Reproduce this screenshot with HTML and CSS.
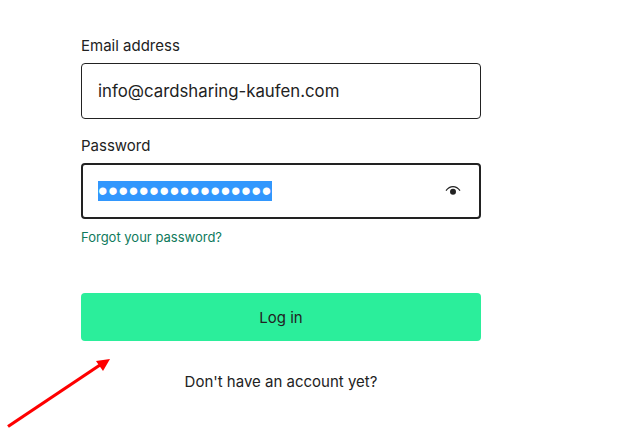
FILE: index.html
```html
<!DOCTYPE html>
<html lang="en">
<head>
  <meta charset="UTF-8">
  <title>Log in</title>
  <link rel="stylesheet" href="styles.css">
</head>
<body>
  <form class="login-form">
    <div class="field-label">Email address</div>
    <div class="field-box">
      <span class="field-value">info@cardsharing-kaufen.com</span>
    </div>

    <div class="field-label field-label-second">Password</div>
    <div class="field-box field-box-focus">
      <span class="pw-dots">&#8226;&#8226;&#8226;&#8226;&#8226;&#8226;&#8226;&#8226;&#8226;&#8226;&#8226;&#8226;&#8226;&#8226;&#8226;&#8226;&#8226;</span>
      <svg class="eye-icon" width="16" height="12" viewBox="0 0 16 12">
        <path d="M1 5.6C3 2.9 5.3 1.6 8 1.6s5 1.3 7 4" fill="none" stroke="#222" stroke-width="1.2"/>
        <circle cx="8" cy="6.8" r="3" fill="#222"/>
      </svg>
    </div>
    <a class="forgot-link" href="#">Forgot your password?</a>

    <div class="login-btn">Log in</div>
    <div class="signup-note">Don't have an account yet?</div>
  </form>

  <svg class="red-arrow" width="120" height="84" viewBox="0 0 120 84">
    <line x1="8" y1="76.5" x2="100" y2="15" stroke="#fe0000" stroke-width="3.2"/>
    <polygon points="110,9 96,11 103,21" fill="#fe0000"/>
  </svg>
</body>
</html>
```

FILE: styles.css
```css
body {
  margin: 0;
  background: #fff;
  font-family: Inter, "Liberation Sans", sans-serif;
  color: #222;
  overflow: hidden;
}

.login-form {
  width: 400px;
  margin-left: 81px;
  padding-top: 37px;
}

.field-label {
  font-size: 15px;
  line-height: 18px;
  margin-bottom: 8px;
}

.field-label-second {
  margin-top: 18px;
}

.field-box {
  box-sizing: border-box;
  height: 56px;
  border: 1px solid #222;
  border-radius: 4px;
  padding: 0 16px;
  display: flex;
  align-items: center;
  justify-content: space-between;
}

.field-box-focus {
  border-width: 2px;
  padding: 0 18px 0 15px;
}

.field-value {
  font-size: 16.8px;
}

.pw-dots {
  background: #3297fd;
  color: #fff;
  font-family: "Liberation Sans", sans-serif;
  font-size: 27px;
  line-height: 20px;
  height: 20px;
  width: 174px;
  letter-spacing: 0.78px;
  white-space: nowrap;
}

.forgot-link {
  display: block;
  margin-top: 10px;
  font-size: 13px;
  line-height: 16px;
  color: #0e7a5c;
  text-decoration: none;
}

.login-btn {
  margin-top: 48px;
  height: 48px;
  border-radius: 4px;
  background: #2bee9b;
  font-size: 15px;
  display: flex;
  align-items: center;
  justify-content: center;
}

.signup-note {
  margin-top: 32px;
  font-size: 15px;
  line-height: 18px;
  text-align: center;
}

.red-arrow {
  position: absolute;
  left: 0;
  top: 350px;
}
```
